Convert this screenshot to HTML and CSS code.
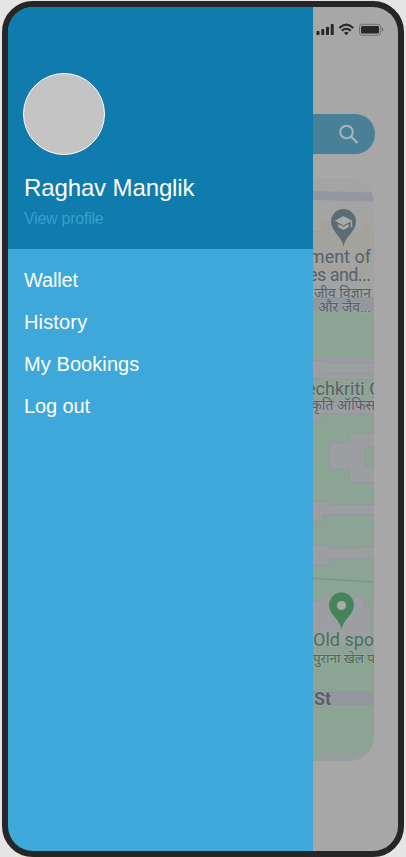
FILE: index.html
```html
<!DOCTYPE html>
<html lang="en">
<head>
<meta charset="utf-8">
<title>Menu</title>
<link rel="stylesheet" href="styles.css">
</head>
<body>
<div class="phone">
  <aside class="drawer">
    <header class="profile">
      <div class="avatar"></div>
      <h1 class="name">Raghav Manglik</h1>
      <a class="view">View profile</a>
    </header>
    <nav class="menu">
      <a class="wallet">Wallet</a>
      <a class="history">History</a>
      <a class="bookings">My Bookings</a>
      <a class="logout">Log out</a>
    </nav>
  </aside>
  <main class="page">
    <svg class="status" viewBox="0 0 72 16">
      <g fill="#282828">
        <rect x="3.5" y="9" width="3" height="4" rx=".8"/>
        <rect x="8.3" y="7" width="3" height="6" rx=".8"/>
        <rect x="13" y="4.7" width="3" height="8.3" rx=".8"/>
        <rect x="17.7" y="2" width="3" height="11" rx=".8"/>
        <path d="M31 10.8Q33.3 8.900 35.600 10.8L33.3 13.300z"/>
        <rect x="48" y="4" width="18" height="7.6" rx="1.4"/>
        <path d="M69 5.5q1.200.6 1.200 2.2t-1.200 2.2z" opacity=".5"/>
      </g>
      <g fill="none" stroke="#282828">
        <path d="M26.3 5.900Q33.3-.500 40.3 5.900M28.8 8.800Q33.3 4.700 37.8 8.800" stroke-width="2.100"/>
        <rect x="46.5" y="2.3" width="21.2" height="11" rx="2.8" opacity=".4"/>
      </g>
    </svg>
    <div class="search">
      <svg class="glass" viewBox="0 0 20 20" fill="none" stroke="#a9b4b9" stroke-width="2">
        <circle cx="7.500" cy="8" r="6.3"/><path d="M12 12.500l6.5 6.5" stroke-width="2.4"/>
      </svg>
    </div>
    <svg class="map" viewBox="313 178 61 583">
      <rect x="313" y="178" width="61" height="583" fill="#a4a4a4"/>
      <path d="M313 191L374 192.5V201.5L313 200z" fill="#9197a1"/>
      <path d="M313 231.5h9.500v-9l2-1.500h3l2 2v11h33.500v-7.500h5v8h6V268h-11v29h-50z" fill="#a4a29c" stroke="#a79e89"/>
      <path d="M363 268h11v29h-61v-20h50z" fill="#a3a3a3"/>
      <path d="M313 297h61v14h-61z" fill="#92969e"/>
      <path d="M313 311h61v450h-61z" fill="#8ca493"/>
      <g fill="#9d9ea1" stroke="#9497a0">
        <path d="M312 358.500h63v21h-63z"/>
        <path d="M312 360.500h14.500v2H375V374h-50.500v4H312z"/>
        <path d="M312 402.500h63v11.500h-53.500v8H312z"/>
        <path d="M375 433.500h-25.500v9H330V469h19.500v13.500H375z"/>
        <path d="M312 501.500h15.500v3.500l47.500-.6V514.500H323v6h-11z"/>
        <path d="M312 545h16.500v3l46.500-.8V558l-46 .8v6.500H312z"/>
        <path d="M312 601h11v-4h41.500v11h6v39H312z"/>
      </g>
      <path d="M375 447h-9.500v21H375z" fill="#8ca493" stroke="#9497a0"/>
      <path d="M313 578.300L374 582" stroke="#709a8b" stroke-width="1.500"/>
      <path d="M313 691h61v14h-61z" fill="#92979d"/>
      <path d="M322 761v-7l2-2h6l3 2 3-1 3 3h6l1-3 5-2v6l5-1 1-4h6l4-3 7-3v15z" fill="#999d9f"/>
      <path d="M343.500 246.500C342 236 331 232 331 221.500a12.500 12.500 0 0 1 25 0C356 232 345 236 343.500 246.500z" fill="#5d6c73"/>
      <path d="M343.500 216l8.700 4.700v6.500h-1.400V221.500l-7.300 4-8.700-4.800zM338.300 224l5.200 2.800 5.200-2.800v3.300l-5.200 2.700-5.200-2.700z" fill="#a8aaab"/>
      <path d="M341.500 629.500C340 619 329 615 329 605a12.500 12.500 0 0 1 25 0C354 615 343 619 341.500 629.500z" fill="#45845a"/>
      <circle cx="341.500" cy="605.500" r="4.600" fill="#a8aaa9"/>
      <g class="labels" fill="#566169">
        <text x="371" y="263" text-anchor="end" class="big">ment of</text>
        <text x="308" y="281" textLength="63" class="big">es and...</text>
        <text x="371" y="298" text-anchor="end" class="hindi">जीव विज्ञान</text>
        <text x="371" y="312" text-anchor="end" class="hindi">और जैव...</text>
        <text x="306" y="395" class="big">echkriti C</text>
        <text x="311" y="410" class="hindi">कृति ऑफिस</text>
        <g fill="#417354">
          <text x="313" y="646" class="big">Old spo</text>
          <text x="313" y="663" class="hindi khel">पुराना खेल प</text>
        </g>
        <text x="314" y="705" class="street">St</text>
      </g>
    </svg>
  </main>
</div>
</body>
</html>
```
FILE: styles.css
```css
* { box-sizing: border-box; }
body { margin: 0; padding: 1px 2px 0; height: 857px; overflow: hidden; background: #e5e5e5; font-family: "Liberation Sans", sans-serif; }
.phone { display: grid; grid-template-columns: 305px 85px; width: 402px; height: 856px; border: 6px solid #262626; border-radius: 31px; overflow: hidden; background: #262626; }
.drawer { background: #3da8d9; color: #fff; }
.profile { height: 242px; padding: 66px 15px 0; background: #107bad; }
.avatar { width: 82px; height: 82px; border: 1px solid #fff; border-radius: 50%; background: #c4c4c4; }
.name { margin: 19px 0 0 1px; font-size: 24px; line-height: 28px; font-weight: 400; letter-spacing: -0.12px; white-space: nowrap; }
.view { display: block; margin: 8px 0 0 1px; font-size: 16px; line-height: 18px; letter-spacing: -0.25px; color: #369fd0; }
.menu { display: flex; flex-direction: column; gap: 18px; padding: 19px 16px; font-size: 20px; line-height: 24px; }
.wallet { letter-spacing: -0.15px; }
.history { letter-spacing: 0.15px; }
.bookings { letter-spacing: 0.08px; }
.logout { letter-spacing: -0.1px; }
.page { background: #a7a7a7; }
.status { display: block; width: 72px; height: 16px; margin-top: 15px; }
.search { display: flex; align-items: center; width: 62px; height: 40px; margin-top: 76px; padding-left: 26px; border-radius: 0 20px 20px 0; background: #488097; }
.glass { width: 20px; height: 20px; }
.map { display: block; width: 61px; height: 583px; margin-top: 24px; border-radius: 0 25px 25px 0; }
.labels { font-family: Roboto, "Noto Sans", sans-serif; paint-order: stroke; stroke: #a2a7a8; stroke-opacity: .6; stroke-width: 2px; }
.big { font-size: 18px; }
.hindi { font-size: 14px; }
.khel { font-size: 13.4px; }
.street { font-size: 18px; font-weight: 700; }
```
